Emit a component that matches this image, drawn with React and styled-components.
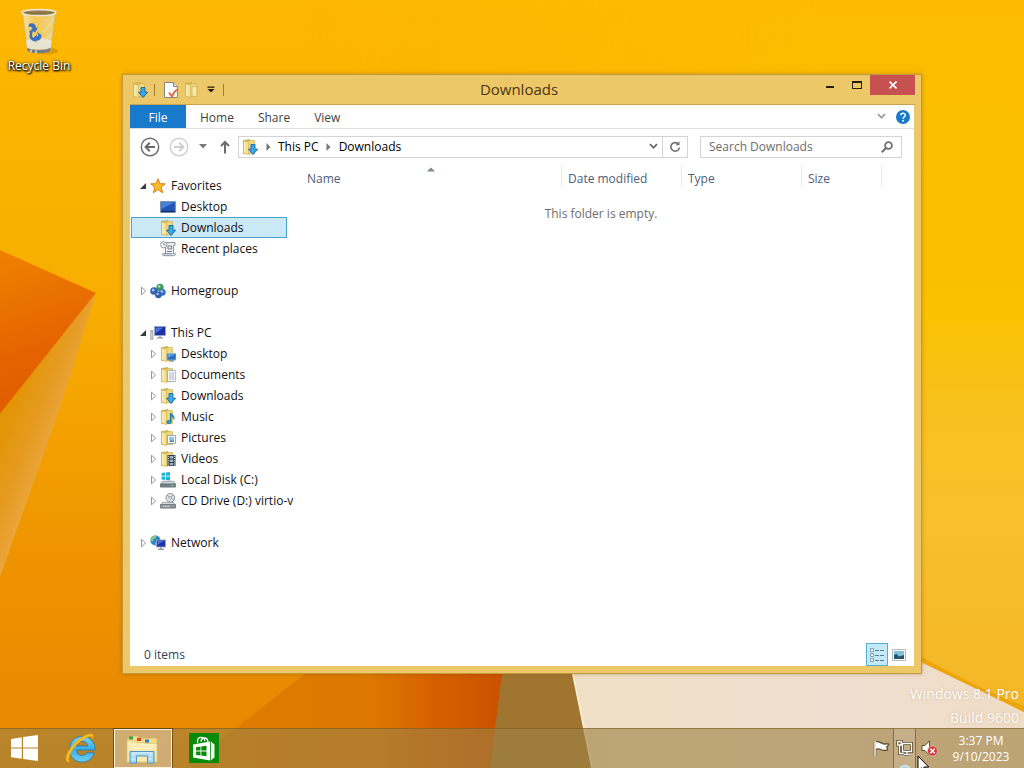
import React from "react";
import styled, { createGlobalStyle, css } from "styled-components";

const Global = createGlobalStyle`
  *, *::before, *::after { box-sizing: border-box; }
  body {
    margin: 0;
    overflow: hidden;
    font-family: "Open Sans", "Noto Sans", sans-serif;
    font-size: 12px;
    line-height: 16px;
    color: #111;
  }
  button, input { font: inherit; color: inherit; }
  ul { list-style: none; margin: 0; padding: 0; }
  svg { display: block; flex: none; }
`;

/* ---------- layout ---------- */

const Desktop = styled.div`
  position: relative;
  display: flex;
  flex-direction: column;
  height: 100vh;
  overflow: hidden;
`;

const Wallpaper = styled.svg`
  position: absolute;
  inset: 0;
  width: 100%;
  height: 100%;
`;

const Workspace = styled.main`
  position: relative;
  flex: 1;
  min-height: 0;
`;

const plainButton = css`
  display: flex;
  align-items: center;
  justify-content: center;
  border: 0;
  padding: 0;
  background: none;
`;

const DesktopIcon = styled.button`
  ${plainButton}
  flex-direction: column;
  gap: 2px;
  width: 78px;
  padding-top: 8px;
  color: #fff;
  text-shadow: 0 1px 2px #000, 1px 1px 2px #000, 0 0 3px rgba(0, 0, 0, 0.7);
`;

const Watermark = styled.div`
  position: absolute;
  right: 5px;
  bottom: -2px;
  font-size: 14px;
  line-height: 24px;
  text-align: right;
  color: #fff;
  text-shadow: 0 0 2px rgba(170, 135, 90, 0.55);
`;

const Window = styled.section`
  position: absolute;
  inset: 74px 102px 54px 122px;
  display: flex;
  flex-direction: column;
  padding: 0 7px 7px;
  border: 1px solid #c3993f;
  background: #edc869;
  box-shadow: 0 0 4px rgba(110, 70, 0, 0.35);
`;

const TitleBar = styled.header`
  display: flex;
  flex: none;
  height: 30px;
  margin-right: -1px;
  border-bottom: 1px solid #c9a24c;
`;

const QuickAccess = styled.div`
  display: flex;
  align-items: center;
  width: 98px;
`;

const QuickButton = styled.button`
  ${plainButton}
  width: ${(p) => p.$width}px;
  height: 28px;
`;

const Divider = styled.span`
  width: 1px;
  height: 12px;
  margin: 0 4px;
  background: #a07c35;
`;

const Title = styled.h1`
  flex: 1;
  margin: 0;
  padding-right: 6px;
  font-size: 15px;
  font-weight: 400;
  line-height: 29px;
  text-align: center;
  color: #4b360f;
`;

const CaptionButton = styled.button`
  ${plainButton}
  width: ${(p) => (p.$close ? 45 : 27)}px;
  height: 20px;
  background: ${(p) => (p.$close ? "#c75050" : "none")};
`;

const Client = styled.div`
  display: flex;
  flex-direction: column;
  flex: 1;
  min-height: 0;
  background: #fff;
`;

const Ribbon = styled.div`
  display: flex;
  flex: none;
  height: 24px;
  padding-right: 4px;
  border-bottom: 1px solid #dcdde0;
`;

const Tab = styled.button`
  ${plainButton}
  padding: 2px 12px 0;
  color: #3f3f3f;
  ${(p) =>
    p.$file &&
    css`
      width: 56px;
      height: 23px;
      margin-right: 2px;
      background: #1979ca;
      color: #fff;
    `}
`;

const RibbonTools = styled.div`
  display: flex;
  align-items: center;
  gap: 10px;
  margin-left: auto;
`;

const IconButton = styled.button`
  ${plainButton}
`;

const AddressRow = styled.div`
  display: flex;
  align-items: center;
  flex: none;
  height: 37px;
  padding: 0 12px 2px 10px;
`;

const HistoryButtons = styled.div`
  display: flex;
  align-items: center;
  gap: 9px;
  width: 98px;
`;

const AddressBar = styled.div`
  display: flex;
  align-items: center;
  flex: 1;
  height: 22px;
  padding-left: 3px;
  border: 1px solid #d4d4d4;
  color: #000;
`;

const CrumbButton = styled.button`
  ${plainButton}
  width: 20px;
  height: 20px;
`;

const RefreshButton = styled(IconButton)`
  width: 25px;
  height: 20px;
  margin-left: 4px;
  border-left: 1px solid #d4d4d4;
`;

const SearchBox = styled.label`
  display: flex;
  align-items: center;
  width: 202px;
  height: 22px;
  margin-left: 12px;
  padding: 0 8px;
  border: 1px solid #d4d4d4;
`;

const SearchInput = styled.input`
  flex: 1;
  min-width: 0;
  height: 18px;
  padding: 0;
  border: 0;
  outline: 0;
  background: none;
  &::placeholder {
    color: #6d6d6d;
    opacity: 1;
  }
`;

const Body = styled.div`
  display: flex;
  flex: 1;
  min-height: 0;
`;

const NavPane = styled.nav`
  display: flex;
  flex-direction: column;
  gap: 21px;
  flex: none;
  width: 158px;
  padding: 9px 1px 0;
`;

const NavItem = styled.a`
  display: flex;
  align-items: center;
  height: 21px;
  padding-left: ${(p) => (p.$child ? 18 : 8)}px;
  border: 1px solid ${(p) => (p.$selected ? "#4aa3c6" : "transparent")};
  background: ${(p) => (p.$selected ? "#cbe8f6" : "none")};
  color: inherit;
  text-decoration: none;
  white-space: nowrap;
`;

const Expander = styled.span`
  width: 10px;
  flex: none;
`;

const NavLabel = styled.span`
  padding-left: 5px;
`;

const FilePane = styled.div`
  flex: 1;
  min-width: 0;
  text-align: center;
`;

const Columns = styled.table`
  width: calc(100% - 13px);
  margin-left: 13px;
  border-collapse: separate;
  border-spacing: 0;
  table-layout: fixed;
`;

const Column = styled.th`
  position: relative;
  width: ${(p) => (p.$width ? `${p.$width}px` : "auto")};
  height: 21px;
  padding: 5px 6px 0;
  border-right: ${(p) => (p.$width ? "1px solid #e6e9ee" : "0")};
  font-weight: 400;
  text-align: left;
  color: #4c607a;
`;

const SortMark = styled.svg`
  position: absolute;
  top: 1px;
  left: calc(50% - 4px);
`;

const EmptyText = styled.p`
  margin: 19px 0 0;
  color: #6d6d6d;
`;

const StatusBar = styled.footer`
  display: flex;
  align-items: center;
  flex: none;
  height: 23px;
  padding: 0 4px 0 14px;
  color: #33425a;
`;

const ViewButton = styled.button`
  ${plainButton}
  width: 22px;
  height: 23px;
  border: 1px solid ${(p) => (p.$active ? "#4fb0cf" : "transparent")};
  background: ${(p) => (p.$active ? "#c5e9f7" : "none")};
`;

const Spacer = styled.span`
  flex: 1;
`;

const Taskbar = styled.footer`
  position: relative;
  display: flex;
  flex: none;
  height: 40px;
  border-top: 1px solid rgba(110, 80, 20, 0.5);
  background: rgba(156, 129, 68, 0.62);
  color: #fff;
`;

const TaskButton = styled.button`
  ${plainButton}
  width: ${(p) => p.$width}px;
  height: 39px;
  padding: 0 2px 2px 0;
  ${(p) =>
    p.$active &&
    css`
      padding-bottom: 0;
      border: 1px solid #fbf1dc;
      background: rgba(222, 200, 165, 0.6);
      outline: 1px solid rgba(70, 45, 5, 0.6);
    `}
`;

const TrayButton = styled.button`
  ${plainButton}
  width: ${(p) => (p.$hot ? 23 : 25)}px;
  height: 39px;
  padding-bottom: 2px;
  ${(p) =>
    p.$hot &&
    css`
      border: solid rgba(90, 68, 30, 0.6);
      border-width: 0 1px;
      background: rgba(255, 255, 255, 0.12);
    `}
`;

const Clock = styled.time`
  width: 83px;
  padding: 4px 3px 0 0;
  line-height: 16px;
  text-align: center;
`;

const Cursor = styled.svg`
  position: absolute;
  right: 94px;
  bottom: -6px;
  pointer-events: none;
`;

const BusyRing = styled.svg`
  position: absolute;
  right: 112px;
  bottom: -10px;
  pointer-events: none;
`;

/* ---------- small icons ---------- */

const FolderShape = () => (
  <>
    <path d="M1.500 1.500 8 .6v13.600l-6.500.4Z" fill="#dfc057" stroke="#c5a03a" strokeWidth=".7" />
    <path d="M6 1.600h6.500v13H6Z" fill="#f0d983" stroke="#cfae4b" strokeWidth=".7" />
    <path d="M1.500 1.800 6.800 3v12.500L1.500 14.400Z" fill="#f4e194" stroke="#ccaa48" strokeWidth=".6" />
    <path d="M2.800 3.500v10" stroke="#fdf5c9" strokeWidth="1" />
  </>
);

const overlays = {
  folder: <path d="M8 4.500h4.800v9.800H8Z" fill="#f8e9ab" stroke="#cfae4b" strokeWidth=".7" />,
  downloads: (
    <path d="M9 5.500h4v4.700h2.600L11 15.600 6.600 10.200H9Z" fill="#39a7e8" stroke="#1267ad" strokeWidth=".9" />
  ),
  desktop: (
    <>
      <path d="M7 7.500h9V14H7Z" fill="#2b6bb8" stroke="#8bb2d8" strokeWidth=".8" />
      <path d="M7.600 8h7.800L7.600 12Z" fill="#5fa2e2" />
      <path d="M9 15h5" stroke="#5f7891" />
    </>
  ),
  documents: (
    <>
      <path d="M7.500 3.500h7.800v11H7.500Z" fill="#fff" stroke="#96a3b3" strokeWidth=".8" />
      <path d="M9 6h5M9 8h5M9 10h5M9 12h5" stroke="#8a9bb5" strokeWidth=".9" strokeDasharray="2 .5 3" />
    </>
  ),
  music: (
    <>
      <path d="M10.700 4v8.500" stroke="#176f9f" strokeWidth="1.500" />
      <path d="M10.700 3.500c1.200 2 3.800 2.400 3.900 5.400 0 1.200-.4 1.800-.9 2.400 0-2.400-1.200-3.300-3-3.800Z" fill="#2590bf" />
      <ellipse cx="9" cy="13" rx="2.300" ry="1.700" fill="#2b9bcb" stroke="#176f9f" strokeWidth=".6" />
    </>
  ),
  pictures: (
    <>
      <path d="M7.500 5.500h8v8h-8Z" fill="#fff" stroke="#8397a8" strokeWidth=".8" />
      <path d="M9 7h5v3H9Z" fill="#8ec6e8" />
      <path d="m9 12 2-2.500 1.500 1.300L14 9.500V12Z" fill="#4e8d91" />
    </>
  ),
  videos: (
    <>
      <path d="M7.500 4h8v11h-8Z" fill="#333c47" />
      <path d="M9.700 5h3.600v2.400H9.700Zm0 3.400h3.600v2.600H9.700Zm0 3.600h3.600v2.200H9.700Z" fill="#9cb7cd" />
      <path d="M8.500 4.800V15M14.500 4.800V15" stroke="#e9edf0" strokeWidth=".9" strokeDasharray="1 1.200" />
    </>
  ),
};

const FolderIcon = ({ kind = "folder" }) => (
  <svg width="16" height="16" viewBox="0 0 16 16" aria-hidden="true">
    <FolderShape />
    {overlays[kind]}
  </svg>
);

const Monitor = ({ x, y, w, h }) => (
  <>
    <rect x={x} y={y} width={w} height={h} fill="#1e2fae" stroke="#9da9ba" strokeWidth=".9" />
    <path d={`M${x + 1} ${y + 1}h${w - 3}L${x + 1} ${y + h - 2}Z`} fill="#4b6ee0" />
    <path d={`M${x + w / 2} ${y + h}v2M${x + w / 2 - 3} ${y + h + 2.4}h6`} stroke="#8b95a3" strokeWidth="1.300" />
  </>
);

const icons = {
  star: (
    <path
      d="m8 .8 2 5h5.300l-4.200 3.400 1.600 5.600L8 11.600l-4.700 3.200 1.600-5.600L.7 5.800H6Z"
      fill="#fcc02e"
      stroke="#dc7c12"
      strokeWidth="1"
      strokeLinejoin="round"
    />
  ),
  desktop: (
    <>
      <path d="M.6 2.600h14.800v10.800H.6Z" fill="#2554b8" stroke="#7991ad" />
      <path d="M1.300 3.200h13L1.300 10Z" fill="#4a83dd" />
      <path d="M1.200 12.500h13.600" stroke="#14306c" strokeWidth="1.200" />
    </>
  ),
  recent: (
    <>
      <path d="M5.500 1.500h9.500v2.800h-1.500v8.400h2c0 1.400-.8 2-1.800 2H4c-1 0-1.600-.6-1.600-1.900h3.100Z" fill="#eceff1" stroke="#89939e" />
      <path d="M8 5h3.500v3H8Zm-1 5.500h5M4.500 12.800h8" fill="none" stroke="#75818e" />
      <circle cx="3.800" cy="3.800" r="3.100" fill="#fff" stroke="#8d969f" />
      <path d="M3.800 2v2h1.600" stroke="#59636e" fill="none" strokeWidth=".8" />
    </>
  ),
  homegroup: (
    <>
      <circle cx="10" cy="4.400" r="3.600" fill="#3e9b58" />
      <circle cx="9.200" cy="3.400" r="1.400" fill="#a0dab0" />
      <circle cx="4" cy="8" r="3.800" fill="#2f63b5" />
      <circle cx="3.200" cy="6.900" r="1.500" fill="#a3c2ee" />
      <circle cx="12.400" cy="9.400" r="3.300" fill="#3472be" />
      <circle cx="11.700" cy="8.500" r="1.200" fill="#b2cff0" />
      <circle cx="8.400" cy="11.800" r="3.400" fill="#2d5fae" />
      <circle cx="7.700" cy="10.900" r="1.200" fill="#aecbf0" />
    </>
  ),
  pc: (
    <>
      <path d="M.8 5.500h2v8.800h-2Z" fill="#d8dde2" stroke="#8a939d" strokeWidth=".8" />
      <Monitor x={4.5} y={1.5} w={11} h={9} />
    </>
  ),
  disk: (
    <>
      <path d="M1.500.9 5 .5v3.300H1.500Zm4.300-.5L10 0v3.800H5.800ZM1.500 4.600H5V8l-3.500-.4Zm4.300 0H10v4l-4.200-.5Z" fill="#1fb4d9" />
      <path d="M2.500 9.300h11l2 3H.5Z" fill="#cfd5da" stroke="#7f8890" strokeWidth=".7" />
      <path d="M.5 11.900h15v3.200H.5Z" fill="#77838c" stroke="#5d6870" strokeWidth=".7" />
      <path d="M11.500 13.500h2" stroke="#5de070" strokeWidth="1.100" />
    </>
  ),
  cd: (
    <>
      <circle cx="10.300" cy="4.800" r="4.300" fill="#e5e7e9" stroke="#858c92" />
      <path d="M7.500 2.500 10 4.500M13 2l-2 2.500M13.500 7l-2-1.500" stroke="#8f969b" strokeWidth=".9" />
      <circle cx="10.300" cy="4.800" r="1.300" fill="#fff" stroke="#858c92" strokeWidth=".8" />
      <path d="M2.500 9.300h11l2 3H.5Z" fill="#d7dadc" stroke="#7f868c" strokeWidth=".7" />
      <path d="M.5 11.500h15v3.600H.5Z" fill="#8e9599" stroke="#62686c" strokeWidth=".7" />
      <path d="M3 13.300h7" stroke="#f4f5f6" strokeDasharray="1.400 .8" />
    </>
  ),
  network: (
    <>
      <circle cx="5.400" cy="5.400" r="5" fill="#2585cf" />
      <path d="M2 2.200c2-1.800 4-1.600 4.800-1.200L5.400 3.600 3.500 4 3 6.400.8 6C.6 4 1.200 3 2 2.200Zm3 5.200 2 .4.3 2L5.200 10.300Z" fill="#83cd7c" />
      <Monitor x={6.5} y={5} w={9} h={7} />
    </>
  ),
};

const SystemIcon = ({ name }) => (
  <svg width="16" height="16" viewBox="0 0 16 16" aria-hidden="true">
    {icons[name]}
  </svg>
);

const Triangle = ({ open }) => (
  <svg width="10" height="10" viewBox="0 0 10 10" aria-hidden="true">
    {open ? (
      <path d="M6 2v6H0Z" fill="#3a3a3a" />
    ) : (
      <path d="M1.500 1.200v7.600L5.600 5Z" fill="#fff" stroke="#979797" />
    )}
  </svg>
);

const CrumbArrow = () => (
  <svg width="5" height="8" viewBox="0 0 5 8" aria-hidden="true">
    <path d="M.5 0v8L4.500 4Z" fill="#777" />
  </svg>
);

const Chevron = ({ color = "#666" }) => (
  <svg width="9" height="7" viewBox="0 0 9 7" aria-hidden="true">
    <path d="m1 1.200 3.500 3.600L8 1.200" fill="none" stroke={color} strokeWidth="1.800" />
  </svg>
);

const CircleArrow = ({ back }) => (
  <svg width="20" height="20" viewBox="0 0 20 20" aria-hidden="true">
    <g fill="none" stroke={back ? "#6b6b6b" : "#cfcfcf"}>
      <circle cx="10" cy="10" r="8.700" strokeWidth="1.400" />
      <path d={back ? "M15 10H6M9.800 5.800 5.600 10l4.200 4.200" : "M5 10h9m-3.800-4.200 4.200 4.200-4.200 4.200"} strokeWidth="2" />
    </g>
  </svg>
);

const RecycleBin = () => (
  <svg width="40" height="48" viewBox="0 0 40 48" aria-hidden="true">
    <defs>
      <linearGradient id="bin" x1="0" x2="1">
        <stop offset="0" stopColor="#f3e3b0" stopOpacity=".95" />
        <stop offset=".4" stopColor="#f5cd62" stopOpacity=".85" />
        <stop offset="1" stopColor="#e8d692" stopOpacity=".95" />
      </linearGradient>
    </defs>
    <ellipse cx="27" cy="43" rx="12" ry="3.500" fill="#a86d00" opacity=".35" />
    <path d="M3.500 4h33l-5 38c-4 3.600-19 3.600-23 0Z" fill="url(#bin)" stroke="#c9b98c" strokeWidth=".8" />
    <path d="M7 33c7-4 18-4 25.800 0l-1.500 7c-5 2-17 2-23 0Z" fill="#e6e8ea" opacity=".8" />
    <path d="M8.300 40c5 2.600 18 2.600 23.200 0l-.4 3c-4 3-18.500 3-22.500 0Z" fill="#737a83" />
    <path d="M12 41.800v2.400M17 42.500v2.400" stroke="#dfe3e8" strokeWidth="1.500" />
    <path d="M10 16c3-2 7 0 7 4l2-.5-3 5-4.500-3 2-.5c0-2-2-2.500-4-2Zm8 8 4.500 3c0 4-2 6-5 5.500v2l-3.500-4 4-4v2c1 0 1.400-1 1-2Zm-8-1 4-1-1 5c0 2 1 3 3 3.500v3c-5-1-6.500-5-5-8Z" fill="#3c6fc0" />
    <path d="M24 24 35 11M20 38l13-12" stroke="#fff" strokeWidth=".7" opacity=".5" />
    <ellipse cx="20" cy="4.500" rx="16.800" ry="3" fill="#a28d5c" stroke="#eee9da" strokeWidth="1.500" />
    <ellipse cx="20" cy="5" rx="14.500" ry="1.600" fill="#8d7541" />
  </svg>
);

/* ---------- wallpaper ---------- */

const WallpaperArt = () => (
  <Wallpaper viewBox="0 0 1024 768" preserveAspectRatio="none" aria-hidden="true">
    <defs>
      <linearGradient id="sky" x1="0" y1="0" x2="0" y2="1">
        <stop offset="0" stopColor="#fdb800" />
        <stop offset=".4" stopColor="#f8ad00" />
        <stop offset=".72" stopColor="#ef9400" />
        <stop offset="1" stopColor="#e68600" />
      </linearGradient>
      <linearGradient id="east" x1="0" y1="0" x2="0" y2="1">
        <stop offset="0" stopColor="#fcbb00" />
        <stop offset=".4" stopColor="#fac100" />
        <stop offset=".52" stopColor="#f9c11c" />
        <stop offset=".68" stopColor="#f8c02c" />
        <stop offset=".9" stopColor="#f5b726" />
      </linearGradient>
      <linearGradient id="eastFade" x1="0" x2="1">
        <stop offset=".3" stopColor="#fff" stopOpacity="0" />
        <stop offset=".8" stopColor="#fff" />
      </linearGradient>
      <mask id="eastMask">
        <rect width="1024" height="768" fill="url(#eastFade)" />
      </mask>
      <linearGradient id="wing" x1=".2" y1="0" x2=".4" y2="1">
        <stop offset="0" stopColor="#ee8000" />
        <stop offset=".6" stopColor="#e56400" />
        <stop offset="1" stopColor="#de5b00" />
      </linearGradient>
      <linearGradient id="fold" gradientUnits="userSpaceOnUse" x1="5" y1="430" x2="50" y2="447">
        <stop offset="0" stopColor="#e39508" />
        <stop offset=".5" stopColor="#e59b20" />
        <stop offset="1" stopColor="#eba63c" />
      </linearGradient>
      <linearGradient id="ember" gradientUnits="userSpaceOnUse" x1="240" y1="0" x2="500" y2="0">
        <stop offset="0" stopColor="#df7b00" />
        <stop offset=".5" stopColor="#dd7800" />
        <stop offset=".75" stopColor="#d66000" />
        <stop offset="1" stopColor="#ca5200" />
      </linearGradient>
      <linearGradient id="cream" gradientUnits="userSpaceOnUse" x1="570" y1="0" x2="1024" y2="0">
        <stop offset="0" stopColor="#eedfc5" />
        <stop offset=".6" stopColor="#efdfd0" />
        <stop offset="1" stopColor="#f0dcc6" />
      </linearGradient>
    </defs>
    <rect width="1024" height="768" fill="url(#sky)" />
    <rect width="1024" height="768" fill="url(#east)" mask="url(#eastMask)" />
    <path d="M0 250 96 293 0 414Z" fill="url(#wing)" />
    <path d="M96 293 60 408 0 577V414Z" fill="url(#fold)" />
    <path d="M335 650 185 768h315l20-118Z" fill="url(#ember)" />
    <path d="m505 650-15 118h102l-24-118Z" fill="#9f7530" />
    <path d="m568 650 24 118h432v-56L900 648Z" fill="url(#cream)" />
    <path d="m568 650 24 118" stroke="#fff2d8" strokeWidth="1.500" />
    <path d="M900 645c40 22 80 44 124 61v6L900 652Z" fill="#eda50e" />
  </Wallpaper>
);

/* ---------- content ---------- */

const navGroups = [
  {
    label: "Favorites",
    icon: "star",
    open: true,
    items: [
      { label: "Desktop", icon: "desktop" },
      { label: "Downloads", folder: "downloads", selected: true },
      { label: "Recent places", icon: "recent" },
    ],
  },
  { label: "Homegroup", icon: "homegroup", items: [] },
  {
    label: "This PC",
    icon: "pc",
    open: true,
    items: [
      { label: "Desktop", folder: "desktop", expandable: true },
      { label: "Documents", folder: "documents", expandable: true },
      { label: "Downloads", folder: "downloads", expandable: true },
      { label: "Music", folder: "music", expandable: true },
      { label: "Pictures", folder: "pictures", expandable: true },
      { label: "Videos", folder: "videos", expandable: true },
      { label: "Local Disk (C:)", icon: "disk", expandable: true },
      { label: "CD Drive (D:) virtio-v", icon: "cd", expandable: true },
    ],
  },
  { label: "Network", icon: "network", items: [] },
];

const NavTree = () => (
  <NavPane aria-label="Folders">
    {navGroups.map((group) => (
      <ul key={group.label}>
        <li>
          <NavItem href="#">
            <Expander>
              <Triangle open={group.open} />
            </Expander>
            <SystemIcon name={group.icon} />
            <NavLabel>{group.label}</NavLabel>
          </NavItem>
        </li>
        {group.items.map((item) => (
          <li key={item.label}>
            <NavItem href="#" $child $selected={item.selected}>
              <Expander>{item.expandable && <Triangle />}</Expander>
              {item.folder ? <FolderIcon kind={item.folder} /> : <SystemIcon name={item.icon} />}
              <NavLabel>{item.label}</NavLabel>
            </NavItem>
          </li>
        ))}
      </ul>
    ))}
  </NavPane>
);

const Explorer = () => (
  <Window aria-label="Downloads">
    <TitleBar>
      <QuickAccess>
        <QuickButton $width={20} aria-label="Window menu"><FolderIcon kind="downloads" /></QuickButton>
        <Divider />
        <QuickButton $width={24} aria-label="Properties">
          <svg width="16" height="16" viewBox="0 0 16 16">
            <path d="M1.500.5h9l4 4v11h-13Z" fill="#fff" stroke="#8a8578" />
            <path d="M10.500.5v4h4" fill="#e4e4e4" stroke="#8a8578" />
            <path d="m6 10.500 3 4c1-3 2.500-5 5-7" fill="none" stroke="#e0694f" strokeWidth="2" />
          </svg>
        </QuickButton>
        <QuickButton $width={20} aria-label="New folder"><FolderIcon /></QuickButton>
        <QuickButton $width={17} aria-label="Customize Quick Access Toolbar">
          <svg width="8" height="7" viewBox="0 0 8 7">
            <path d="M.5.5h7v1.300h-7ZM.5 3h7L4 6.500Z" fill="#2b1c05" />
          </svg>
        </QuickButton>
        <Divider />
      </QuickAccess>
      <Title>Downloads</Title>
      <CaptionButton aria-label="Minimize">
        <svg width="10" height="10" viewBox="0 0 10 10"><path d="M1 6h8v2H1Z" fill="#2b1c05" /></svg>
      </CaptionButton>
      <CaptionButton aria-label="Maximize">
        <svg width="10" height="8" viewBox="0 0 10 8">
          <path d="M0 0h10v8H0Zm1 2v5h8V2Z" fill="#2b1c05" fillRule="evenodd" />
        </svg>
      </CaptionButton>
      <CaptionButton $close aria-label="Close">
        <svg width="8" height="8" viewBox="0 0 8 8">
          <path d="m.5.5 7 7m0-7-7 7" stroke="#fff" strokeWidth="1.600" />
        </svg>
      </CaptionButton>
    </TitleBar>
    <Client>
      <Ribbon>
        <Tab $file>File</Tab>
        <Tab>Home</Tab>
        <Tab>Share</Tab>
        <Tab>View</Tab>
        <RibbonTools>
          <IconButton aria-label="Expand the ribbon"><Chevron color="#9a9a9a" /></IconButton>
          <IconButton aria-label="Help">
            <svg width="14" height="14" viewBox="0 0 14 14">
              <circle cx="7" cy="7" r="7" fill="#1979ca" />
              <path d="M4.800 5.200C4.800 2.500 9.400 2.600 9.300 5.200 9.200 6.800 7.100 6.900 7.100 8.700" fill="none" stroke="#fff" strokeWidth="1.500" />
              <circle cx="7.100" cy="10.800" r="1" fill="#fff" />
            </svg>
          </IconButton>
        </RibbonTools>
      </Ribbon>
      <AddressRow>
        <HistoryButtons>
          <IconButton aria-label="Back"><CircleArrow back /></IconButton>
          <IconButton aria-label="Forward"><CircleArrow /></IconButton>
          <IconButton aria-label="Recent locations">
            <svg width="10" height="5" viewBox="0 0 10 5"><path d="M1 0h8L5 4.500Z" fill="#777" /></svg>
          </IconButton>
          <IconButton aria-label="Up">
            <svg width="16" height="14" viewBox="0 0 16 14">
              <path d="M8 13.500V2M4 6l4-4 4 4" fill="none" stroke="#6b6b6b" strokeWidth="2" />
            </svg>
          </IconButton>
        </HistoryButtons>
        <AddressBar>
          <FolderIcon kind="downloads" />
          <CrumbButton aria-label="Show locations"><CrumbArrow /></CrumbButton>
          <span>This PC</span>
          <CrumbButton aria-label="Show folders"><CrumbArrow /></CrumbButton>
          <span>Downloads</span>
          <Spacer />
          <IconButton aria-label="Previous locations"><Chevron /></IconButton>
          <RefreshButton aria-label="Refresh">
            <svg width="12" height="12" viewBox="0 0 12 12">
              <path d="M9.500 3.200A4.300 4.300 0 1 0 10.400 6.500" fill="none" stroke="#707070" strokeWidth="1.600" />
              <path d="M6.500 4.200h4V.2Z" fill="#707070" />
            </svg>
          </RefreshButton>
        </AddressBar>
        <SearchBox>
          <SearchInput type="text" placeholder="Search Downloads" aria-label="Search Downloads" />
          <svg width="12" height="12" viewBox="0 0 12 12" aria-hidden="true">
            <circle cx="7.500" cy="4.500" r="3.400" fill="none" stroke="#707070" strokeWidth="1.800" />
            <path d="M5 7 .8 11.200" stroke="#707070" strokeWidth="2" />
          </svg>
        </SearchBox>
      </AddressRow>
      <Body>
        <NavTree />
        <FilePane>
          <Columns>
            <thead>
              <tr>
                <Column $width={261} scope="col" aria-sort="ascending">
                  Name
                  <SortMark width="8" height="5" viewBox="0 0 8 5" aria-hidden="true">
                    <path d="M0 4.500h8L4 .5Z" fill="#7d8996" />
                  </SortMark>
                </Column>
                <Column $width={120} scope="col">Date modified</Column>
                <Column $width={120} scope="col">Type</Column>
                <Column $width={80} scope="col">Size</Column>
                <Column as="td" />
              </tr>
            </thead>
          </Columns>
          <EmptyText>This folder is empty.</EmptyText>
        </FilePane>
      </Body>
      <StatusBar>
        <span>0 items</span>
        <Spacer />
        <ViewButton $active aria-label="Details view">
          <svg width="16" height="16" viewBox="0 0 16 16">
            <g fill="#fff" stroke="#7d9cae">
              <path d="M1.500 1.500h3v3h-3Zm0 5h3v3h-3Zm0 5h3v3h-3Z" />
            </g>
            <path d="M6 3.500h4m1 0h4M6 8.500h4m1 0h4M6 13.500h4m1 0h4" stroke="#587b90" />
          </svg>
        </ViewButton>
        <ViewButton aria-label="Large icons view">
          <svg width="14" height="12" viewBox="0 0 14 12">
            <path d="M.5.5h13v11H.5Z" fill="#fff" stroke="#b4bcc3" />
            <path d="M2 2h10v8H2Z" fill="#82bfd8" />
            <path d="M2 10V6l2.500-1L7 7.500 12 6v4Z" fill="#24566a" />
          </svg>
        </ViewButton>
      </StatusBar>
    </Client>
  </Window>
);

const App = () => (
  <>
    <Global />
    <Desktop>
      <WallpaperArt />
      <Workspace>
        <DesktopIcon>
          <RecycleBin />
          <span>Recycle Bin</span>
        </DesktopIcon>
        <Watermark>
          <div>Windows 8.1 Pro</div>
          <div>Build 9600</div>
        </Watermark>
        <Explorer />
      </Workspace>
      <Taskbar>
        <TaskButton $width={50} aria-label="Start">
          <svg width="28" height="28" viewBox="0 0 28 28">
            <path d="M1 5 11.800 3.300V13.400H1ZM13 3.100 28 1v12.400H13ZM1 14.600h10.800v10.100L1 23.200Zm12 0h15V27l-15-2.100Z" fill="#fff" />
          </svg>
        </TaskButton>
        <TaskButton $width={64} aria-label="Internet Explorer">
          <svg width="32" height="32" viewBox="0 0 32 32">
            <defs>
              <linearGradient id="ie" x1="0" y1="0" x2="0" y2="1">
                <stop offset="0" stopColor="#7fd4f5" />
                <stop offset=".5" stopColor="#37aee4" />
                <stop offset="1" stopColor="#6fd0f4" />
              </linearGradient>
            </defs>
            <path d="M30 18H11.500c.3 3.500 2.600 5.500 5.500 5.500 2.200 0 3.700-.8 4.800-2.700h7.500C27.500 26 23.500 30 17 30 9.500 30 4.500 24.500 4.500 17.200 4.500 9.800 9.800 4.500 17 4.500c8 0 13.300 5.300 13 13.500ZM11.600 14h11.200c-.2-2.800-2.400-4.600-5.600-4.600-3 0-5.200 1.800-5.600 4.600Z" fill="url(#ie)" stroke="#1b78b8" strokeWidth=".8" />
            <path d="M27.500 7.500c.6-2.800-1.500-3.700-5-2.300C13.800 8.700 5.500 18 3.800 26.200c-.4 2 .1 3.200 1.500 3.400-3.300 1.300-4.800-.8-4.200-4.200C2.500 17.500 11.800 6.500 21.500 2.700c6-2.300 8.500.3 6 4.800Z" fill="#f8c01e" stroke="#dc9a10" strokeWidth=".5" />
          </svg>
        </TaskButton>
        <TaskButton $width={58} $active aria-label="File Explorer">
          <svg width="32" height="30" viewBox="0 0 32 30">
            <path d="M1 4h5l1-2h5l1 2h18v24H1Z" fill="#f4dc88" stroke="#d2b45b" strokeWidth=".8" />
            <path d="M3 2.500h4v3H3Z" fill="#31a354" />
            <path d="M11 4h4v3h-4Z" fill="#d8442f" />
            <path d="M19 5.500h4v3h-4Z" fill="#317fc4" />
            <path d="M1 7h8l1 1.500h8l1 1h12V28H1Z" fill="#faeaad" stroke="#dcc06b" strokeWidth=".6" />
            <path d="M4 11h6M14 11h14M4 14h24" stroke="#fff8d8" />
            <path d="M4 17.500h24V29h-6.500v-7h-11v7H4Z" fill="#a9d9f0" stroke="#4a96c6" strokeWidth="1" />
            <path d="M5.500 19h21M6 21h3M23 21h3M6 25h3M23 25h3" stroke="#e7f7ff" />
          </svg>
        </TaskButton>
        <TaskButton $width={66} aria-label="Store">
          <svg width="30" height="30" viewBox="0 0 30 30">
            <path d="M0 0h30v30H0Z" fill="#098a0a" />
            <path d="M8.500 10V8c0-4.500 7-5 7.300 0M12 8.500c.5-5 7-4.500 6.800.5" fill="none" stroke="#fff" strokeWidth="1.300" />
            <path d="m4 11.500 17-3v19L4 24.500Z" fill="#fff" />
            <path d="m21.800 8.500 3.700 3v13l-3.700 3Z" fill="#fff" opacity=".92" />
            <path d="m7 14.300 4.500-.7v4H7Zm5.300-.8 5.200-.8v4.900h-5.200ZM7 18.400h4.500v4L7 21.800Zm5.300 0h5.200v4.900l-5.200-.8Z" fill="#098a0a" />
          </svg>
        </TaskButton>
        <Spacer />
        <TrayButton aria-label="Action Center">
          <svg width="18" height="18" viewBox="0 0 18 18">
            <path d="M3 2v15M3.500 3.500c3-1 4.500.5 6.500 1.500s3.500.5 6 .5l-2 2.500 1 2.500c-3 .8-5 0-6.500-.8s-3-.7-5 0Z" fill="#fff" stroke="#5e4a27" strokeWidth="2.500" strokeLinejoin="round" />
            <path d="M3 2v15" stroke="#fff" strokeWidth="1.400" />
            <path d="M3.500 3.500c3-1 4.500.5 6.500 1.500s3.500.5 6 .5l-2 2.500 1 2.500c-3 .8-5 0-6.500-.8s-3-.7-5 0Z" fill="#fff" />
          </svg>
        </TrayButton>
        <TrayButton $hot aria-label="Network">
          <svg width="18" height="18" viewBox="0 0 18 18" fill="none">
            <path d="M6.500 4.500h9v8h-9ZM8 15.500h6M11 12.500v3M3.500 6v8.500h4M1.800 2.500h3.500V6H1.800Z" stroke="#5e4a27" strokeWidth="3" />
            <path d="M6.500 4.500h9v8h-9ZM8 15.500h6M11 12.500v3M3.500 6v8.500h4M1.800 2.500h3.500V6H1.800Z" stroke="#fff" strokeWidth="1.300" />
          </svg>
        </TrayButton>
        <TrayButton aria-label="Volume muted">
          <svg width="18" height="18" viewBox="0 0 18 18">
            <path d="M2 6.500h3l4.500-4.700v14.400L5 11.500H2Z" fill="#fff" stroke="#5e4a27" strokeWidth="1" />
            <circle cx="12.500" cy="12" r="5" fill="#d23a3a" stroke="#f0c3b5" strokeWidth=".7" />
            <path d="m10.300 9.800 4.400 4.400m0-4.400-4.400 4.400" stroke="#fff" strokeWidth="1.600" />
          </svg>
        </TrayButton>
        <Clock>
          <div>3:37 PM</div>
          <div>9/10/2023</div>
        </Clock>
      </Taskbar>
      <BusyRing width="14" height="14" viewBox="0 0 14 14" aria-hidden="true">
        <circle cx="7" cy="7" r="5.500" fill="#a8d3e4" stroke="#d6e6e6" strokeWidth="1.500" />
      </BusyRing>
      <Cursor width="13" height="19" viewBox="0 0 13 19" aria-hidden="true">
        <path d="M1 1v15l3.500-3.300L7 18l2.200-1-2.400-5h4.900Z" fill="#fff" stroke="#000" />
      </Cursor>
    </Desktop>
  </>
);

export default App;
